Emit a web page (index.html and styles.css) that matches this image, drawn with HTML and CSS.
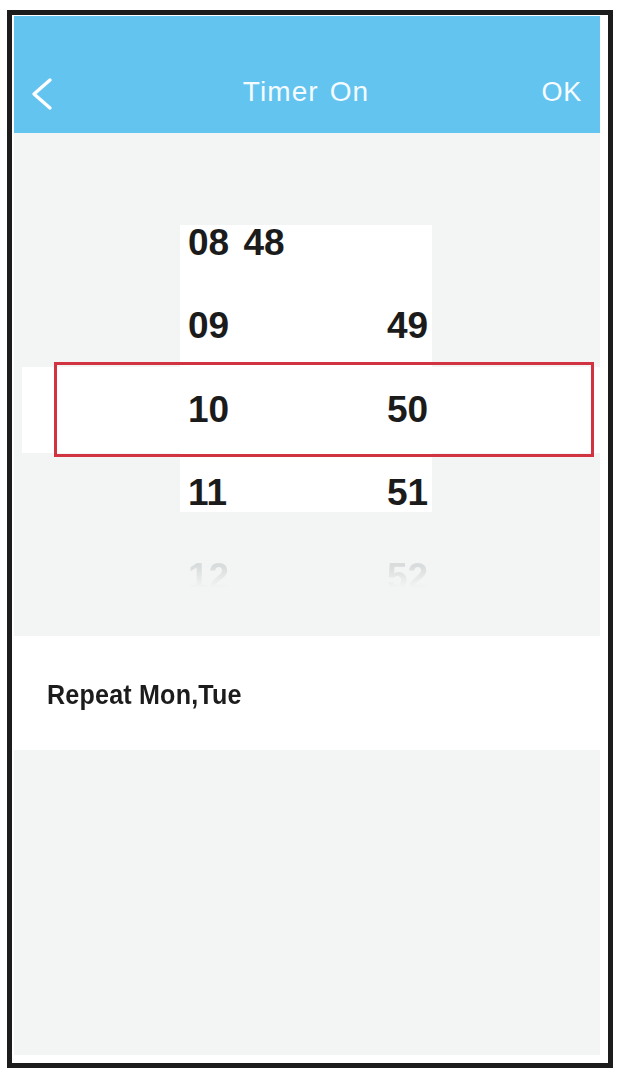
FILE: index.html
```html
<!DOCTYPE html>
<html lang="en">
<head>
<meta charset="utf-8">
<title>Timer On</title>
<link rel="stylesheet" href="styles.css">
</head>
<body>
<div class="frame">
  <div class="screen">
    <header class="topbar">
      <div class="topbar-row">
        <div class="back">
          <svg class="back-icon" width="24" height="44" viewBox="0 0 24 44" aria-hidden="true">
            <path d="M20 12 L4 26 L20 40" fill="none" stroke="#ffffff" stroke-width="3.4" stroke-linecap="round" stroke-linejoin="round"/>
          </svg>
        </div>
        <div class="title">Timer On</div>
        <div class="ok">OK</div>
      </div>
    </header>

    <section class="picker">
      <div class="wheel-bg"></div>
      <div class="band"></div>
      <div class="wheel">
        <div class="cell">08 48</div><div class="cell"></div>
        <div class="cell">09</div><div class="cell">49</div>
        <div class="cell">10</div><div class="cell">50</div>
        <div class="cell">11</div><div class="cell">51</div>
        <div class="cell faded">12</div><div class="cell faded">52</div>
      </div>
      <div class="selection"></div>
    </section>

    <section class="repeat"><span class="repeat-text">Repeat Mon,Tue</span></section>

    <div class="rest"></div>
  </div>
</div>
</body>
</html>
```

FILE: styles.css
```css
html, body {
  margin: 0;
  padding: 0;
  background: #ffffff;
}

body {
  font-family: "Liberation Sans", Arial, sans-serif;
}

.frame {
  margin: 10px 0 0 7px;
  border: 5px solid #1c1c1c;
  padding: 1px 8px 8px 2px;
  width: 586px;
  height: 1039px;
}

.screen {
  width: 586px;
  height: 1039px;
  display: flex;
  flex-direction: column;
  background: #f3f5f5;
}

.topbar {
  height: 117px;
  flex: none;
  box-sizing: border-box;
  padding: 52px 18px 0 16px;
  background: #63c4ef;
  color: #ffffff;
}

.topbar-row {
  display: grid;
  grid-template-columns: 1fr auto 1fr;
  height: 44px;
  align-items: start;
}

.back-icon {
  display: block;
}

.title {
  margin-top: 4px;
  font-size: 28px;
  line-height: 40px;
  letter-spacing: 1.1px;
  word-spacing: 2px;
  color: #f4fbff;
}

.ok {
  justify-self: end;
  margin-top: 4px;
  font-size: 27px;
  line-height: 40px;
  letter-spacing: 0.8px;
  color: #f7fcff;
}

.picker {
  position: relative;
  height: 503px;
  flex: none;
  background: #f3f5f5;
}

.wheel-bg {
  position: absolute;
  left: 166px;
  top: 92px;
  width: 252px;
  height: 287px;
  background: #ffffff;
}

.band {
  position: absolute;
  left: 8px;
  top: 234px;
  width: 578px;
  height: 86px;
  background: #ffffff;
}

.wheel {
  position: relative;
  margin-left: 174px;
  padding-top: 68px;
  display: grid;
  grid-template-columns: 199px 80px;
  grid-auto-rows: 83.5px;
  align-items: center;
}

.cell {
  font-size: 37px;
  font-weight: bold;
  color: #1b1b1b;
  white-space: pre;
  word-spacing: 4px;
}

.cell.faded {
  color: #d9dcdc;
  -webkit-mask-image: linear-gradient(to bottom, #000 25%, transparent 75%);
  mask-image: linear-gradient(to bottom, #000 25%, transparent 75%);
}

.selection {
  position: absolute;
  left: 40px;
  top: 229px;
  width: 540px;
  height: 95px;
  box-sizing: border-box;
  border: 3px solid #d13341;
}

.repeat {
  height: 114px;
  flex: none;
  box-sizing: border-box;
  padding: 5px 0 0 33px;
  line-height: 109px;
  background: #ffffff;
  font-size: 27px;
  font-weight: bold;
  color: #1c1c1c;
}

.repeat-text {
  display: inline-block;
  letter-spacing: 0.2px;
  transform: scaleX(0.93);
  transform-origin: left center;
}

.rest {
  flex: 1;
  background: #f3f5f5;
}
```
